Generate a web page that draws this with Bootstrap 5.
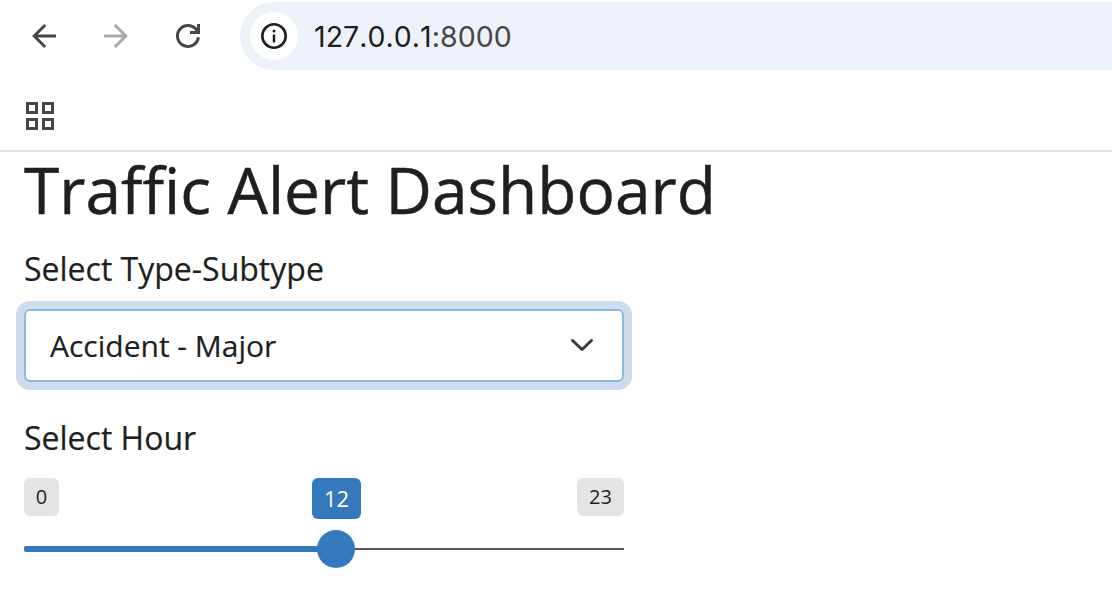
<!DOCTYPE html>
<html lang="en">
<head>
<meta charset="utf-8">
<title>Traffic Alert Dashboard</title>
<link href="https://cdn.jsdelivr.net/npm/bootstrap@5.3.0/dist/css/bootstrap.min.css" rel="stylesheet">
<style>
body{font-family:"Open Sans","Noto Sans",sans-serif;color:#1d1f21;overflow:hidden;height:592px}
svg{display:block;flex:none}
.toolbar{height:72px;padding:2px 0 2px 24px}
.nav-icons{gap:32px;width:216px;color:#474747}
.address{height:68px;border-radius:34px 0 0 34px;background:#edf2fa;padding-left:10px}
.site-info{width:48px;height:48px;color:#1f1f1f}
.url{font:400 28.5px/40px Inter,sans-serif;font-kerning:none;letter-spacing:.05px;color:#1f1f1f;margin-left:16px;padding-top:1px;white-space:nowrap}
.url .port{color:#474747}
.bookmarks{height:80px;padding:30px 0 0 26px;border-bottom:2px solid #e1e1e1}
.page{padding:0 24px;-webkit-text-stroke:.2px currentColor}
.title{font-size:64px;font-weight:400;line-height:76px;height:76px;margin:0;-webkit-text-stroke-width:.5px;white-space:nowrap}
.field-label{font-size:32px;line-height:48px;height:48px;white-space:nowrap}
.type-label{margin-top:17px}
.type-select{width:600px;height:73px;margin-top:16px;border:2px solid #8bbadf;border-radius:6px;box-shadow:0 0 0 8px #cdddec;padding:0 28px 0 24px;font-size:30px;line-height:45px}
.hour-label{margin-top:32px}
.hour{width:600px;height:92px;margin-top:16px;-webkit-text-stroke-width:0}
.tag{font-size:20px;line-height:38px;height:38px;border-radius:6px;background:#e4e4e4;text-align:center}
.tag-min{width:35px}
.tag-max{width:47px}
.tag-value{font-size:22px;line-height:41px;height:41px;width:49px;background:#3579bd;color:#fff;left:288px;top:0}
.track{height:38px;margin-top:14px}
.fill{height:6px;width:312px;background:#3579bd;border-radius:2px 0 0 2px}
.rest{height:2px;background:#58565a}
.handle{width:38px;height:38px;background:#3579bd;left:293px;top:0}
</style>
</head>
<body class="bg-white">
<header>
  <div class="toolbar d-flex align-items-center">
    <nav class="nav-icons d-flex">
      <svg width="40" height="40" viewBox="0 0 40 40" fill="none" stroke="currentColor" stroke-width="3"><path d="M32 20H10M21.200 9L10.200 20l11 11"/></svg>
      <svg width="40" height="40" viewBox="0 0 40 40" fill="none" stroke="#a9a9a9" stroke-width="3"><path d="M8 20h22M18.800 9l11 11-11 11"/></svg>
      <svg width="40" height="40" viewBox="0 0 40 40" fill="none" stroke="currentColor" stroke-width="3"><path d="M30.400 21.300A10.500 10.500 0 1 1 27.600 12.700L30 16M30.500 8v8.500H22"/></svg>
    </nav>
    <div class="address d-flex align-items-center flex-grow-1">
      <div class="site-info bg-white rounded-circle d-flex align-items-center justify-content-center">
        <svg width="26" height="26" viewBox="0 0 26 26"><circle cx="13" cy="13" r="11.700" fill="none" stroke="currentColor" stroke-width="2.600"/><circle cx="13" cy="8" r="1.500" fill="currentColor"/><path d="M13 11.500v8" stroke="currentColor" stroke-width="2.500"/></svg>
      </div>
      <div class="url">127.0.0.1<span class="port">:8000</span></div>
    </div>
  </div>
  <div class="bookmarks">
    <svg width="28" height="28" viewBox="0 0 28 28" fill="none" stroke="#474747" stroke-width="3"><path d="M1.500 1.500h9v9h-9zM17.500 1.500h9v9h-9zM1.500 17.500h9v9h-9zM17.500 17.500h9v9h-9z"/></svg>
  </div>
</header>
<main class="page">
  <h1 class="title">Traffic Alert Dashboard</h1>
  <div class="field-label type-label">Select Type-Subtype</div>
  <div class="type-select bg-white d-flex align-items-center justify-content-between" role="combobox">
    <span>Accident - Major</span>
    <svg width="24" height="16" viewBox="0 0 24 16" fill="none" stroke="#343a40" stroke-width="3" stroke-linecap="round" stroke-linejoin="round"><path d="M2.500 2.500L12 11.500 21.500 2.500"/></svg>
  </div>
  <div class="field-label hour-label">Select Hour</div>
  <div class="hour position-relative">
    <div class="d-flex justify-content-between">
      <span class="tag tag-min">0</span>
      <span class="tag tag-max">23</span>
    </div>
    <span class="tag tag-value position-absolute">12</span>
    <div class="track position-relative d-flex align-items-center">
      <div class="fill"></div><div class="rest flex-grow-1"></div>
      <div class="handle rounded-circle position-absolute"></div>
    </div>
  </div>
</main>
<script src="https://cdn.jsdelivr.net/npm/bootstrap@5.3.0/dist/js/bootstrap.bundle.min.js"></script>
</body>
</html>
